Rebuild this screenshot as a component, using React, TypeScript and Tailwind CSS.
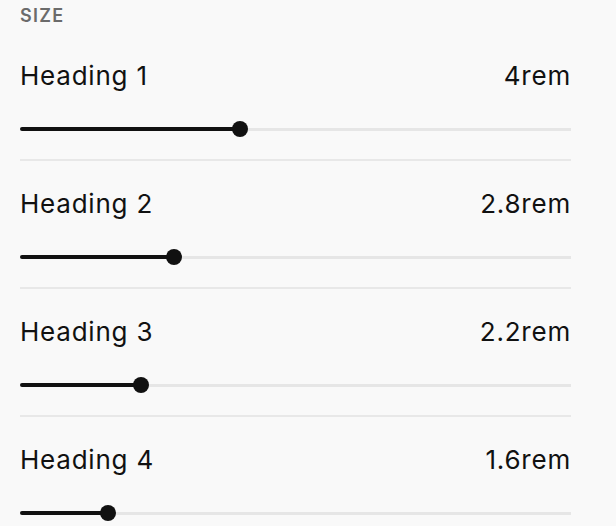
import React from 'react';

type Row = {
	label: string;
	value: number;
};

const rows: Row[] = [
	{ label: 'Heading 1', value: 4 },
	{ label: 'Heading 2', value: 2.8 },
	{ label: 'Heading 3', value: 2.2 },
	{ label: 'Heading 4', value: 1.6 }
];

const MAX = 10;

const SizeSlider: React.FC<{ value: number }> = ({ value }) => {
	const pct = (value / MAX) * 100;
	return (
		<div className="flex items-center h-4">
			<div className="h-1 bg-[#111111] rounded-l-full" style={{ width: `${pct}%` }} />
			<div className="relative z-10 w-4 h-4 -mx-2 shrink-0 rounded-full bg-[#111111]" />
			<div className="flex-1 h-[3px] bg-[#e6e6e6]" />
		</div>
	);
};

export default function App() {
	return (
		<div className="min-h-screen bg-[#f9f9f9] text-[#111111]" style={{ fontFamily: 'Inter, "Noto Sans", sans-serif' }}>
			<div className="w-[571px] pl-5 pt-[6px]">
				<div className="text-[18px] leading-5 font-semibold tracking-[0.07em] text-[#6b6b6b]">SIZE</div>
				<div className="mt-[7px]">
					{rows.map((r) => (
						<div key={r.label} className="pt-[27px] pb-[22px] border-b-2 border-[#e8e8e8]">
							<div className="flex items-center justify-between text-[26px] leading-8 tracking-[0.03em]">
								<span>{r.label}</span>
								<span>{r.value}rem</span>
							</div>
							<div className="mt-[29px]">
								<SizeSlider value={r.value} />
							</div>
						</div>
					))}
				</div>
			</div>
		</div>
	);
}
